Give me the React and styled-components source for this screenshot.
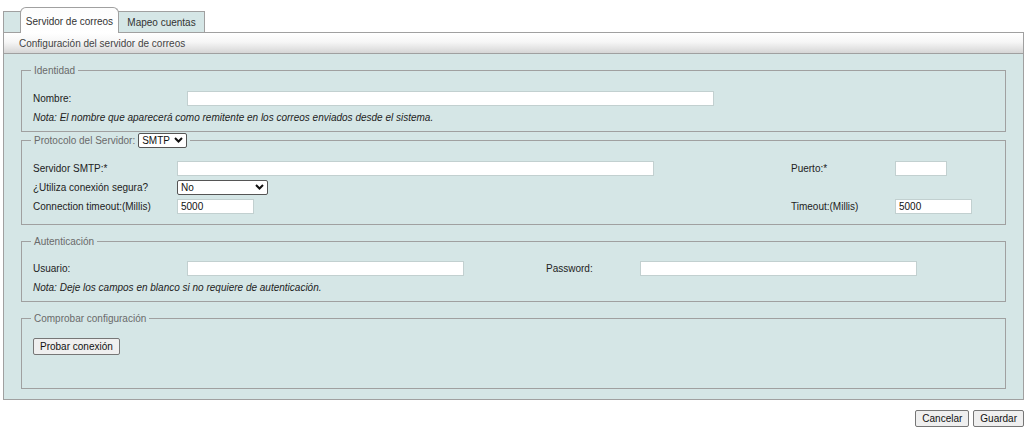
import React from 'react'
import styled, { createGlobalStyle } from 'styled-components'

const GlobalStyle = createGlobalStyle`
	body {
		margin: 0;
		background: #fff;
		font-family: "Liberation Sans", Arial, sans-serif;
		font-size: 10px;
		color: #222;
	}
`

const Chevron = () => (
	<svg width="9" height="6" viewBox="0 0 9 6">
		<path d="M1 1l3.5 3.5L8 1" fill="none" stroke="#111" strokeWidth="2" />
	</svg>
)

const Select = ({ width, value, options }) => (
	<SelectWrap $width={width}>
		<NativeSelect defaultValue={value}>
			{options.map(o => <option key={o}>{o}</option>)}
		</NativeSelect>
		<Arrow><Chevron /></Arrow>
	</SelectWrap>
)

const App = () => {
	return (
		<Page>
			<GlobalStyle />
			<TabStrip>
				<Tab $active>Servidor de correos</Tab>
				<Tab>Mapeo cuentas</Tab>
			</TabStrip>
			<Header>Configuración del servidor de correos</Header>
			<Panel>
				<Fieldset $pt={12}>
					<Legend>Identidad</Legend>
					<Grid $cols="154px 1fr">
						<Label>Nombre:</Label>
						<Input $width={527} />
						<Note>Nota: El nombre que aparecerá como remitente en los correos enviados desde el sistema.</Note>
					</Grid>
				</Fieldset>

				<Fieldset $tight $pb={8}>
					<Legend>
						Protocolo del Servidor:
						<Select width={49} value="SMTP" options={['SMTP', 'POP3', 'IMAP']} />
					</Legend>
					<Grid $cols="144px 614px 104px 1fr">
						<Label>Servidor SMTP:*</Label>
						<Input $width={477} />
						<Label>Puerto:*</Label>
						<Input $width={52} />

						<Label>¿Utiliza conexión segura?</Label>
						<Select width={91} value="No" options={['No', 'SSL', 'TLS']} />
						<span />
						<span />

						<Label>Connection timeout:(Millis)</Label>
						<Input $width={77} defaultValue="5000" />
						<Label>Timeout:(Millis)</Label>
						<Input $width={77} defaultValue="5000" />
					</Grid>
				</Fieldset>

				<Fieldset>
					<Legend>Autenticación</Legend>
					<Grid $cols="154px 359px 94px 1fr">
						<Label>Usuario:</Label>
						<Input $width={277} />
						<Label>Password:</Label>
						<Input $width={277} type="password" />
						<Note>Nota: Deje los campos en blanco si no requiere de autenticación.</Note>
					</Grid>
				</Fieldset>

				<Fieldset $pt={12}>
					<Legend>Comprobar configuración</Legend>
					<ButtonRow>
						<Button>Probar conexión</Button>
					</ButtonRow>
				</Fieldset>
			</Panel>
			<Footer>
				<Button>Cancelar</Button>
				<Button>Guardar</Button>
			</Footer>
		</Page>
	)
}

const Page = styled.div`
	width: 1021px;
	padding: 7px 0 0 3px;
`

const TabStrip = styled.div`
	display: inline-flex;
	align-items: flex-end;
	height: 20px;
	margin-top: 4px;
	padding-left: 16px;
	background: #d5e6e6;
	border-top: 1px solid #a0a0a0;
	border-left: 1px solid #a0a0a0;
	vertical-align: bottom;
`

const Tab = styled.div`
	position: relative;
	box-sizing: border-box;
	display: flex;
	align-items: center;
	justify-content: center;
	padding-top: 1px;
	color: #333;
	white-space: nowrap;
	${p => p.$active ? `
		z-index: 1;
		height: 26px;
		margin-bottom: -1px;
		width: 99px;
		background: linear-gradient(#fdfdfd, #fff);
		border: 1px solid #a0a0a0;
		border-bottom: none;
		border-radius: 6px 6px 0 0;
	` : `
		height: 21px;
		margin-top: -1px;
		width: 86px;
		background: #d5e6e6;
		border: 1px solid #a0a0a0;
		border-left: none;
		border-bottom: none;
	`}
`

const Header = styled.div`
	box-sizing: border-box;
	height: 22px;
	display: flex;
	align-items: center;
	padding-left: 15px;
	color: #444;
	background: linear-gradient(#ffffff 0%, #f6f6f6 45%, #d6d6d6 100%);
	border: 1px solid #a0a0a0;
`

const Panel = styled.div`
	padding: 10px 17px 10px;
	background: #d5e6e6;
	border: 1px solid #a0a0a0;
	border-top: none;
`

const Fieldset = styled.fieldset`
	margin: ${p => p.$tight ? 1 : 10}px 0 0;
	&:first-child {
		margin-top: 0;
	}
	padding: ${p => p.$pt ?? 11}px 11px ${p => p.$pb ?? 4}px;
	border: 1px solid #a0a0a0;
	min-width: 0;
`

const Legend = styled.legend`
	display: flex;
	align-items: center;
	gap: 3px;
	padding: 0 3px;
	margin-left: -2px;
	color: #6a6a6a;
	line-height: 13px;
`

const Grid = styled.div`
	display: grid;
	grid-template-columns: ${p => p.$cols};
	grid-auto-rows: 19px;
	align-items: center;
`

const Label = styled.span`
	color: #222;
	white-space: nowrap;
`

const Note = styled.div`
	grid-column: 1 / -1;
	font-style: italic;
	color: #222;
	height: 16px;
	line-height: 16px;
`

const Input = styled.input`
	box-sizing: border-box;
	width: ${p => p.$width}px;
	height: 15px;
	padding: 0 3px;
	border: 1px solid #c2d0d0;
	background: #fff;
	font: 10px "Liberation Sans", Arial, sans-serif;
	color: #111;
	outline: none;
`

const SelectWrap = styled.div`
	position: relative;
	width: ${p => p.$width}px;
	height: 15px;
`

const NativeSelect = styled.select`
	appearance: none;
	-webkit-appearance: none;
	box-sizing: border-box;
	width: 100%;
	height: 15px;
	margin: 0;
	padding: 0 0 0 3px;
	border: 1px solid #555;
	border-radius: 2px;
	background: #fff;
	font: 10px "Liberation Sans", Arial, sans-serif;
	line-height: 13px;
	color: #111;
	outline: none;
`

const Arrow = styled.span`
	position: absolute;
	right: 4px;
	top: 4px;
	display: flex;
	pointer-events: none;
`

const ButtonRow = styled.div`
	display: flex;
	align-items: center;
	height: 19px;
	margin-bottom: 28px;
`

const Button = styled.button`
	box-sizing: border-box;
	height: 17px;
	padding: 0 6px;
	font: 10px "Liberation Sans", Arial, sans-serif;
	color: #111;
	background: #efefef;
	border: 1px solid #767676;
	border-radius: 2px;
`

const Footer = styled.div`
	display: flex;
	justify-content: flex-end;
	gap: 4px;
	margin-top: 10px;
`

export default App
